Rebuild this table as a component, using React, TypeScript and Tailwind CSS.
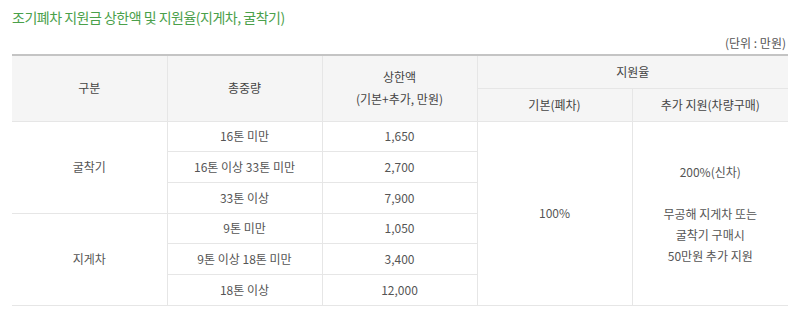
const rows = [
  { group: "굴착기", weight: "16톤 미만", limit: "1,650" },
  { group: "", weight: "16톤 이상 33톤 미만", limit: "2,700" },
  { group: "", weight: "33톤 이상", limit: "7,900" },
  { group: "지게차", weight: "9톤 미만", limit: "1,050" },
  { group: "", weight: "9톤 이상 18톤 미만", limit: "3,400" },
  { group: "", weight: "18톤 이상", limit: "12,000" },
];

const th = "border border-[#e6e6e6] bg-[#f5f5f5] font-normal text-[#444]";
const td = "border border-[#e6e6e6] h-[30.7px] text-center";

export default function App() {
  return (
    <div
      className="w-[800px] h-[318px] bg-white px-3 pt-[7px] text-[12px] text-[#555]"
      style={{ fontFamily: '"Noto Sans CJK KR", "Noto Sans", sans-serif' }}
    >
      <h2 className="text-[14px] leading-[20px] text-[#4aa04a] tracking-[-0.5px]">
        조기폐차 지원금 상한액 및 지원율(지게차, 굴착기)
      </h2>
      <div className="mt-[8px] text-right leading-[16px] pr-[2px]">(단위 : 만원)</div>
      <table className="mt-[3px] w-full table-fixed border-collapse border-t-2 border-t-[#c4c4c4] text-center">
        <colgroup>
          <col className="w-[155px]" />
          <col className="w-[155px]" />
          <col className="w-[155px]" />
          <col className="w-[155px]" />
          <col className="w-[156px]" />
        </colgroup>
        <thead>
          <tr className="h-[33px]">
            <th rowSpan={2} className={th + " border-l-0"}>구분</th>
            <th rowSpan={2} className={th}>총중량</th>
            <th rowSpan={2} className={th + " leading-[22px]"}>
              상한액
              <br />
              (기본+추가, 만원)
            </th>
            <th colSpan={2} className={th + " border-r-0"}>지원율</th>
          </tr>
          <tr className="h-[33px]">
            <th className={th}>기본(폐차)</th>
            <th className={th + " border-r-0"}>추가 지원(차량구매)</th>
          </tr>
        </thead>
        <tbody>
          {rows.map((r, i) => (
            <tr key={i}>
              {i % 3 === 0 && (
                <td rowSpan={3} className={td + " border-l-0"}>
                  {r.group}
                </td>
              )}
              <td className={td}>{r.weight}</td>
              <td className={td}>{r.limit}</td>
              {i === 0 && (
                <>
                  <td rowSpan={6} className={td}>100%</td>
                  <td rowSpan={6} className={td + " border-r-0 leading-[21px]"}>
                    200%(신차)
                    <br />
                    <br />
                    무공해 지게차 또는
                    <br />
                    굴착기 구매시
                    <br />
                    50만원 추가 지원
                  </td>
                </>
              )}
            </tr>
          ))}
        </tbody>
      </table>
    </div>
  );
}
